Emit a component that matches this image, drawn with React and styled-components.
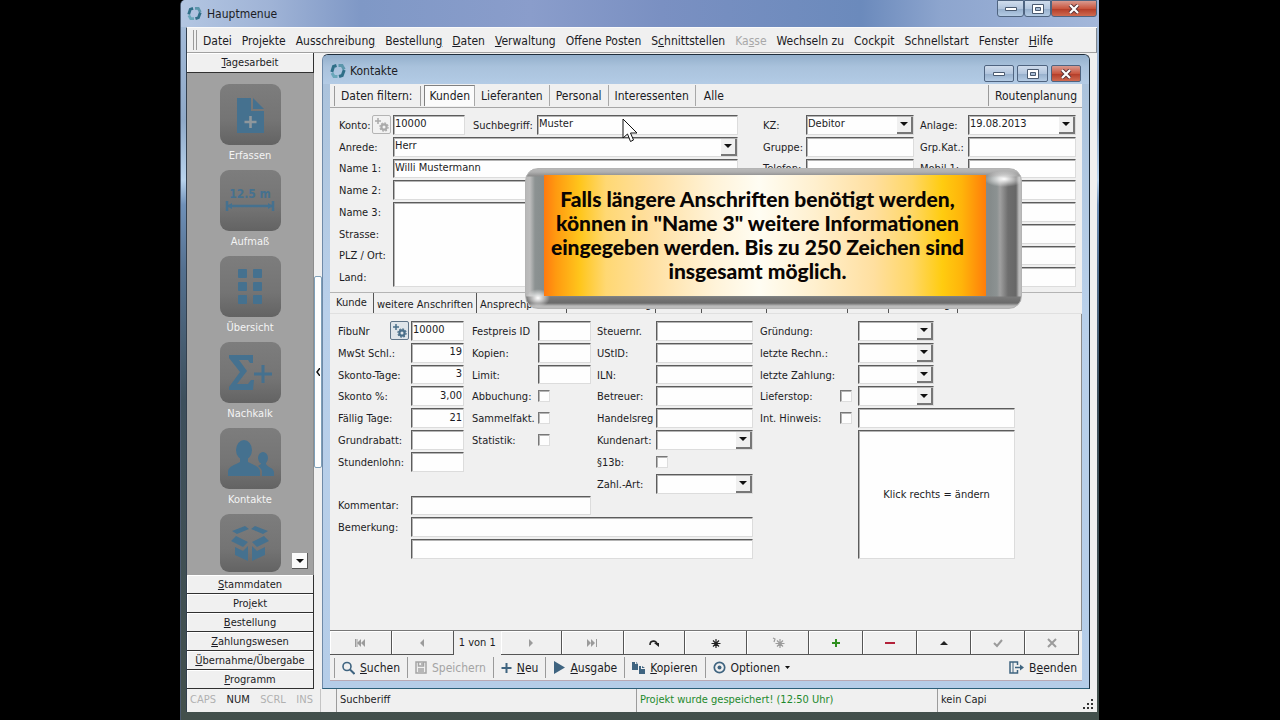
import React from "react";
import styled, { createGlobalStyle, css } from "styled-components";

const Global = createGlobalStyle`
  * { box-sizing: border-box; }
  body { margin: 0; background: #000; overflow-x: hidden; }
  button, input, select, textarea { font: inherit; color: inherit; margin: 0; border-radius: 0; }
  button { background: none; border: 0; padding: 0; cursor: default; white-space: nowrap; }
`;

const ink = "#1c1c24";
const face = "#f0f0f0";
const edge = "#5c5c5c";
const steel = "#3f6480";

/* ---------- outer window ---------- */

const Stage = styled.div`
  display: grid;
  grid-template-columns: 180px minmax(0, 1fr) 181px;
  min-height: 100vh;
  color: ${ink};
  font-family: "DejaVu Sans Condensed", "DejaVu Sans", Tahoma, sans-serif;
  font-stretch: condensed;
  font-size: 12px;
  line-height: 16px;
`;

const Frame = styled.div`
  grid-column: 2;
  display: flex;
  flex-direction: column;
  padding: 0 2px 8px 5px;
  background: linear-gradient(180deg, #a9c0de 0, #8fa9c8 120px, #b9d4ee 180px, #6f90b8 205px, #54708f 270px, #3d4f5c 400px, #43504c 720px);
  border-left: 1px solid #4b5a70;
  border-bottom: 2px solid #0a0a0a;
  border-top-left-radius: 5px;
`;

const TitleBar = styled.header`
  display: flex;
  align-items: center;
  height: 27px;
  margin: 0 -2px 0 -5px;
  padding-left: 6px;
  gap: 5px;
  border-top-left-radius: 5px;
  background: linear-gradient(90deg, #b3c6e2 0, #9fb3d6 90px, #7f98c6 180px, #8a9dcb 350px, #7a90c2 480px, #6b8abc 680px, #8da5ce 760px, #a3b7da 100%);
`;

const Title = styled.h1`
  flex: 1;
  margin: 0;
  font-size: 12px;
  font-weight: 400;
`;

const WinButtons = styled.div`
  display: flex;
  align-self: flex-start;
  gap: ${(p) => (p.$spaced ? "3px" : "0")};
  margin-top: ${(p) => (p.$spaced ? "8px" : "0")};
  margin-right: ${(p) => (p.$spaced ? "1px" : "2px")};
`;

const WinButton = styled.button`
  display: flex;
  align-items: center;
  justify-content: center;
  width: ${(p) => p.$w}px;
  height: 17px;
  border: 1px solid #4f6480;
  border-radius: ${(p) => (p.$spaced ? "2px" : "0 0 3px 3px")};
  background: ${(p) =>
    p.$close
      ? "linear-gradient(#d99a90, #c9563f 50%, #b23a26 51%, #cf6a50)"
      : "linear-gradient(#cfdcec, #b3c6de 50%, #95aecb 51%, #b4cbe4)"};
`;

const Client = styled.div`
  flex: 1;
  display: flex;
  flex-direction: column;
  background: ${face};
  border-left: 1px solid #33404f;
  border-top: 1px solid #fafafa;
`;

const MenuBar = styled.nav`
  display: flex;
  align-items: center;
  height: 25px;
  padding-left: 6px;
  border-bottom: 1px solid #a0a0a0;
  border-right: 1px solid #808890;
`;

const Grip = styled.span`
  width: ${(p) => (p.$double ? "4px" : "1px")};
  height: 20px;
  border: solid #9a9a9a;
  border-width: 0 1px 0 ${(p) => (p.$double ? "1px" : "0")};
`;

const MenuItem = styled.button`
  margin-left: 10px;
  padding-top: 1px;
  color: ${(p) => (p.disabled ? "#a8a8a8" : ink)};
  &:first-of-type { margin-left: 6px; }
`;

const Body = styled.div`
  flex: 1;
  display: grid;
  grid-template-columns: 127px 8px minmax(0, 1fr) 7px;
`;

/* ---------- sidebar ---------- */

const Sidebar = styled.aside`
  display: flex;
  flex-direction: column;
`;

const GroupButton = styled.button`
  height: ${(p) => (p.$tall ? "20px" : "19px")};
  line-height: 17px;
  font-size: 11px;
  background: ${face};
  border: solid #303030;
  border-width: 0 1px 1px 0;
  box-shadow: inset 1px 1px #fff;
`;

const IconPane = styled.div`
  position: relative;
  display: flex;
  flex-direction: column;
  align-items: center;
  flex: 1;
  padding-top: 11px;
  background: #a1a1a1;
  border-right: 1px solid #8c8c8c;
  color: #f4f4f4;
  font-size: 11px;
`;

const Shortcut = styled.button`
  display: flex;
  flex-direction: column;
  align-items: center;
  height: ${(p) => (p.$last ? "61px" : "86px")};
`;

const Tile = styled.span`
  display: flex;
  align-items: center;
  justify-content: center;
  width: 61px;
  height: 61px;
  margin-bottom: 3px;
  border-radius: 9px;
  background: linear-gradient(#7d7d7d, #747474 60%, #636363);
`;

const ScrollDown = styled.button`
  position: absolute;
  right: 5px;
  bottom: 6px;
  display: flex;
  align-items: center;
  justify-content: center;
  width: 16px;
  height: 16px;
  background: #fafafa;
  border: solid #555;
  border-width: 0 1px 1px 0;
`;

const Splitter = styled.div`
  display: flex;
  flex-direction: column;
  padding-top: 223px;
`;

const SplitterGrip = styled.button`
  display: flex;
  align-items: center;
  justify-content: center;
  height: 192px;
  background: #fdfdfd;
  border: 1px solid #7e9fb8;
  border-radius: 2px;
`;

/* ---------- contact window ---------- */

const Child = styled.main`
  position: relative;
  display: flex;
  flex-direction: column;
  margin: 1px 0 0 0;
  padding: 0 7px 7px 7px;
  background: linear-gradient(180deg, #a9c1da, #b9d0ea 40%, #b5cde8);
  border: 1px solid #1d2c3a;
  border-left-color: #6f8aa8;
  border-bottom-color: #2c5f78;
  border-radius: 6px 6px 0 0;
`;

const ChildTitle = styled.div`
  display: flex;
  align-items: center;
  height: 29px;
  margin: 0 -7px;
  padding: 2px 7px 0;
  gap: 4px;
  border-radius: 5px 5px 0 0;
  background: linear-gradient(#93afcb, #a9c2dc 40%, #b3cbe5);
`;

const Panel = styled.div`
  flex: 1;
  display: flex;
  flex-direction: column;
  background: ${face};
`;

const FilterBar = styled.div`
  display: flex;
  align-items: center;
  height: 24px;
  padding: 0 4px 0 4px;
  border-bottom: 1px solid #a6a6a6;
`;

const FilterLabel = styled.span`
  padding: 0 8px 0 6px;
  border-right: 1px solid #9a9a9a;
  line-height: 20px;
`;

const FilterTab = styled.button`
  height: 21px;
  padding: 0 6px;
  line-height: 20px;
  border-right: 1px solid #a8a8a8;
  ${(p) =>
    p.$active &&
    css`
      margin-left: 3px;
      padding: 0 4px;
      background: #fbfbfb;
      border-left: 1px solid #808080;
      border-top: 1px solid #808080;
    `}
  ${(p) => p.$plain && css`padding: 0 8px; border-right: 0;`}
  ${(p) =>
    p.$end &&
    css`
      margin-left: auto;
      padding: 0 1px 0 6px;
      border-right: 0;
      border-left: 1px solid #9a9a9a;
    `}
`;

const fieldLook = css`
  width: 100%;
  min-width: 0;
  background: #fefefe;
  border: 1px solid ${edge};
  border-right-color: #dcdcdc;
  border-bottom-color: #dcdcdc;
  box-shadow: inset 1px 1px #b4b4b4;
  outline: 0;
`;

const HeadForm = styled.form`
  display: grid;
  grid-template-columns: 54px minmax(0, 346px) 25px 43px minmax(0, 108px) 6px 48px minmax(0, 108px);
  grid-template-rows: repeat(8, minmax(0, 1fr));
  row-gap: 2px;
  height: 185px;
  padding: 7px 6px 5px 9px;
  font-size: 11px;
  border-bottom: 1px solid #b4b4b4;
`;

const CustomerForm = styled.form`
  display: grid;
  grid-template-columns:
    73px minmax(0, 53px) 8px 66px minmax(0, 53px) 6px 59px minmax(0, 97px)
    7px 80px 18px minmax(0, 76px) minmax(0, 81px);
  grid-template-rows: repeat(11, minmax(0, 1fr));
  row-gap: 2px;
  height: 245px;
  padding: 7px 0 0 8px;
  font-size: 11px;
`;

const Label = styled.label`
  grid-column: ${(p) => p.$c};
  grid-row: ${(p) => p.$r};
  align-self: center;
  padding-top: 2px;
  line-height: 16px;
  white-space: nowrap;
`;

const Text = styled.input`
  ${fieldLook}
  grid-column: ${(p) => p.$c};
  grid-row: ${(p) => p.$r};
  padding: 0 2px 1px 1px;
  text-align: ${(p) => (p.$num ? "right" : "left")};
  ${(p) => p.$num && css`padding-right: 1px;`}
`;

const Area = styled.textarea`
  ${fieldLook}
  grid-column: ${(p) => p.$c};
  grid-row: ${(p) => p.$r};
  resize: none;
`;

const ComboBox = styled.span`
  ${fieldLook}
  grid-column: ${(p) => p.$c};
  grid-row: ${(p) => p.$r};
  display: flex;
  align-items: stretch;
`;

const ComboSelect = styled.select`
  flex: 1;
  min-width: 0;
  appearance: none;
  border: 0;
  outline: 0;
  background: none;
  padding: 0 0 1px 1px;
`;

const ComboArrow = styled.span`
  display: flex;
  align-items: center;
  justify-content: center;
  width: 16px;
  margin-top: 1px;
  background: ${face};
  border: solid #777;
  border-width: 0 2px 2px 0;
  pointer-events: none;
`;

const Check = styled.input`
  grid-column: ${(p) => p.$c};
  grid-row: ${(p) => p.$r};
  align-self: center;
  appearance: none;
  width: 12px;
  height: 12px;
  background: #fdfdfd;
  border: 1px solid #777;
  border-right-color: #ddd;
  border-bottom-color: #ddd;
  box-shadow: inset 1px 1px #b4b4b4;
`;

const KontoRow = styled.div`
  grid-column: 2;
  grid-row: 1;
  display: grid;
  grid-template-columns: 72px 8px 64px minmax(0, 1fr);
`;

const LabelRow = styled.div`
  grid-column: ${(p) => p.$c};
  grid-row: ${(p) => p.$r};
  display: flex;
  justify-content: space-between;
  align-items: center;
  padding-right: 2px;
`;

const GearButton = styled.button`
  display: flex;
  align-items: center;
  justify-content: center;
  width: 19px;
  height: 19px;
  flex: none;
  border: 1px solid ${(p) => (p.disabled ? "#b4b4b4" : "#5f7488")};
  border-radius: 2px;
  background: ${(p) => (p.disabled ? "#f2f2f2" : "#dfe5ea")};
`;

const PhotoBox = styled.div`
  ${fieldLook}
  grid-column: 12 / 14;
  grid-row: 6 / 12;
  display: flex;
  align-items: center;
  justify-content: center;
`;

const Tabs = styled.div`
  display: flex;
  height: 21px;
  font-size: 11px;
  border-bottom: 1px solid #e0e0e0;
`;

const Tab = styled.button`
  width: ${(p) => p.$w}px;
  padding-top: ${(p) => (p.$active ? "0" : "3px")};
  overflow: hidden;
  border-right: 1px solid #555;
`;

const Sheet = styled.section`
  flex: 1;
  border-right: 1px solid #8a8a8a;
`;

/* ---------- record navigator and commands ---------- */

const Navigator = styled.div`
  display: flex;
  height: 25px;
  padding-right: 3px;
  border-top: 1px solid #777;
`;

const NavCell = styled.button`
  flex: ${(p) => p.$w} 1 0;
  display: flex;
  align-items: center;
  justify-content: center;
  border: solid #555;
  border-width: 0 1px 1px 0;
  box-shadow: inset 1px 1px #fff;
`;

const NavCount = styled.span`
  flex: 48 1 0;
  text-align: center;
  font-size: 11px;
  line-height: 24px;
  white-space: nowrap;
`;

const Commands = styled.div`
  display: flex;
  align-items: center;
  height: 26px;
  padding: 0 4px 0 4px;
  border-bottom: 1px solid #b9a9b4;
`;

const Command = styled.button`
  display: flex;
  align-items: center;
  gap: 5px;
  height: 21px;
  padding: 0 7px;
  color: ${(p) => (p.disabled ? "#a4a4a4" : ink)};
  border-right: 1px solid ${(p) => (p.$plain ? "transparent" : "#9a9a9a")};
  ${(p) => p.$end && css`margin-left: auto; padding: 0;`}
`;

const StatusBar = styled.footer`
  display: grid;
  grid-template-columns: 134px 15px minmax(0, 300fr) minmax(0, 301fr) minmax(0, 146fr) 14px;
  height: 23px;
  font-size: 11px;
  line-height: 22px;
`;

const Keys = styled.div`
  display: flex;
  justify-content: space-between;
  padding: 0 7px 0 3px;
  border-right: 1px solid #c4c4c4;
`;

const Key = styled.span`
  color: ${(p) => (p.$on ? ink : "#b0b0b0")};
`;

const StatusCell = styled.div`
  padding-left: 3px;
  border-left: 1px solid #9c9c9c;
  color: ${(p) => (p.$ok ? "#1d8a2c" : ink)};
`;

/* ---------- overlays ---------- */

const Callout = styled.div`
  position: absolute;
  left: 202px;
  top: 113px;
  width: 497px;
  height: 141px;
  padding: 6px 35px 12px 18px;
  border-radius: 13px;
  border: 1px solid #b4b4b4;
  background:
    radial-gradient(ellipse 20px 8px at 478px 10px, #ffffff, rgba(255, 255, 255, 0) 100%),
    radial-gradient(ellipse 12px 9px at 12px 129px, #ffffff, rgba(255, 255, 255, 0) 100%),
    linear-gradient(180deg, #b8b8b8 0, #b0b0b0 3px, #8c8c8c 7px, rgba(140, 140, 140, 0) 8px, rgba(140, 140, 140, 0) 127px, #7a7a7a 128px, #6a6a6a 134px, #bcbcbc 137px, #bcbcbc 140px),
    linear-gradient(90deg, #b8b8b8 0, #bdbdbd 4px, #8c9292 9px, #858b8b 20px, #858b8b 464px, #8c9292 471px, #a0a0a0 474px, #6e6e6e 482px, #676767 490px, #bcbcbc 493px);
`;

const CalloutText = styled.p`
  height: 100%;
  margin: 0;
  padding: 12px 15px 0 0;
  color: #0a0503;
  text-align: center;
  white-space: nowrap;
  font-family: Lato, sans-serif;
  font-stretch: normal;
  font-weight: 900;
  font-size: 21px;
  line-height: 24px;
  background: linear-gradient(90deg, #ff7a10 0, #ff9a10 12px, #ffc61c 36px, #ffd873 62px, #ffdf9f 105px, #fff3d8 170px, #fffdf3 215px, #fff0cf 270px, #ffdf9f 330px, #ffd766 368px, #ffcc10 398px, #ffb40a 418px, #ff7d0a 100%);
`;

const Pointer = styled.svg`
  position: absolute;
  left: 299px;
  top: 63px;
`;

/* ---------- drawings ---------- */

const Logo = ({ size = 15 }) => (
  <svg width={size} height={size} viewBox="0 0 16 16" fill="none" strokeWidth="3">
    <path d="M8.500 2.500h3.500l2.200 4" stroke="#5b96ab" />
    <path d="M14.200 7l-2 5.500-3.200 1" stroke="#2f6f88" />
    <path d="M7.500 13.500H4l-2-3.500" stroke="#6aa7ba" />
    <path d="M1.800 9l1.700-5.500 3-1" stroke="#2f6f88" />
  </svg>
);

const Down = () => (
  <svg width="8" height="4" viewBox="0 0 8 4"><path d="M0 0h8L4 4z" fill="#111" /></svg>
);

const MinGlyph = () => (
  <svg width="12" height="6" viewBox="0 0 12 6"><path d="M.5 1.5h11v3H.5z" fill="#fff" stroke="#4a5a70" /></svg>
);
const MaxGlyph = () => (
  <svg width="12" height="10" viewBox="0 0 12 10">
    <path d="M.5.5h11v9H.5z" fill="#fff" stroke="#4a5a70" />
    <path d="M3.5 3.5h5v3h-5z" fill="#a9bdd6" stroke="#4a5a70" />
  </svg>
);
const CloseGlyph = () => (
  <svg width="12" height="10" viewBox="0 0 12 10">
    <path d="M2 1l8 8M10 1L2 9" stroke="#5a3035" strokeWidth="4" />
    <path d="M2 1l8 8M10 1L2 9" stroke="#fff" strokeWidth="2.2" />
  </svg>
);

const GearPlus = ({ color }) => (
  <svg width="15" height="15" viewBox="0 0 15 15" fill="none" stroke={color}>
    <path d="M4 1v6M1 4h6" strokeWidth="1.5" />
    <circle cx="10" cy="10" r="2.6" strokeWidth="2.2" />
    <circle cx="10" cy="10" r="4.1" strokeWidth="1.2" strokeDasharray="1.8 1.4" />
  </svg>
);

const blue = "#45718f";
const tiles = {
  Erfassen: (
    <svg width="40" height="44" viewBox="0 0 40 44">
      <path d="M7 5h14v13h13v22H7z" fill={blue} />
      <path d="M23 5l11 11H23z" fill={blue} />
      <path d="M20.500 23v12M14.500 29h12" stroke="#8f979c" strokeWidth="2.600" />
    </svg>
  ),
  "Aufmaß": (
    <svg width="54" height="44" viewBox="0 0 54 44">
      <text x="27" y="19" textAnchor="middle" fontSize="12" fontWeight="700" fill={blue}>12.5 m</text>
      <path d="M4 27h46M4 22v10M50 22v10" stroke={blue} strokeWidth="2.500" />
      <path d="M4 27l5-3v6zM50 27l-5-3v6z" fill={blue} />
    </svg>
  ),
  "Übersicht": (
    <svg width="30" height="40" viewBox="0 0 30 40" fill={blue}>
      {[2, 15, 28].map((y) => (
        <g key={y}>
          <rect x="3" y={y} width="9" height="9" rx="1" />
          <rect x="18" y={y} width="9" height="9" rx="1" />
        </g>
      ))}
    </svg>
  ),
  Nachkalk: (
    <svg width="46" height="40" viewBox="0 0 46 40">
      <path d="M2 2h24v8h-3l-2-3H12l8 11-10 13h11l3-4h3l-1 10H2v-3l11-15L2 5z" fill={blue} />
      <path d="M36 12v18M27 21h18" stroke={blue} strokeWidth="3" />
    </svg>
  ),
  Kontakte: (
    <svg width="48" height="40" viewBox="0 0 48 40" fill={blue}>
      <ellipse cx="18" cy="11" rx="8" ry="10" />
      <path d="M2 37v-5c1-5 7-6 12-9v-5h8v5c5 3 11 4 12 9v5z" />
      <ellipse cx="37" cy="19" rx="5" ry="6" />
      <path d="M36 37v-5c-1-3-3-4-4-5l3-2v-3h5v3c2 4 7 3 8 8v4z" />
    </svg>
  ),
  Material: (
    <svg width="44" height="40" viewBox="0 0 44 40" fill={blue}>
      <path d="M17 3l4 3-12 5-5-3zM27 3l-4 3 12 5 5-3z" />
      <path d="M8 13l12 6-5 5-12-6zM36 13l-12 6 5 5 12-6z" />
      <path d="M7 24l8 4 5-5v15L7 32zM37 24l-8 4-5-5v15l13-6z" />
    </svg>
  ),
};

const glyph = (children, color = "#9b9b9b") => (
  <svg width="16" height="12" viewBox="0 0 16 12" fill={color} stroke={color} strokeWidth="0">{children}</svg>
);

const navCells = [
  ["Erster", 62, glyph(<><path d="M3.500 2v8M5 2v8" strokeWidth="1" /><path d="M9 2v8L5 6zM13 2v8L9 6z" /></>)],
  ["Zurück", 62, glyph(<path d="M10 2v8L6 6z" />)],
  null,
  ["Weiter", 61, glyph(<path d="M6 2v8l4-4z" />)],
  ["Letzter", 62, glyph(<><path d="M12.500 2v8" strokeWidth="1" /><path d="M3 2v8l4-4zM7 2v8l4-4z" /></>)],
  ["Neu laden", 62, glyph(<><path d="M4 8c0-5 6-5 7-1" fill="none" strokeWidth="1.600" /><path d="M8 6h5v4z" /></>, "#222")],
  ["Einfügen", 62, glyph(<path d="M8 2v9M3.500 6.500h9M5 3.500l6 6M11 3.500l-6 6" strokeWidth="1.200" />, "#222")],
  ["Einfügen davor", 62, glyph(<path d="M10 2v9M5.500 6.500h9M7 3.500l6 6M13 3.500l-6 6M3 1l2 1-1 3" fill="none" strokeWidth="1.200" />)],
  ["Hinzufügen", 54, glyph(<path d="M8 2v8M4 6h8" strokeWidth="2" />, "#2f8f1f")],
  ["Löschen", 54, glyph(<path d="M3 6h10" strokeWidth="2" />, "#b3223a")],
  ["Bearbeiten", 54, glyph(<path d="M4 8l4-4 4 4z" />, "#222")],
  ["Übernehmen", 54, glyph(<path d="M4 6l3 3 5-6" fill="none" strokeWidth="2" />)],
  ["Abbrechen", 54, glyph(<path d="M4 2l8 8M12 2l-8 8" strokeWidth="2" />)],
];

const SearchIcon = () => (
  <svg width="13" height="14" viewBox="0 0 13 14" fill="none" stroke={steel}>
    <circle cx="5" cy="5.500" r="4" strokeWidth="1.600" /><path d="M8 8.500l4.500 4.500" strokeWidth="2" />
  </svg>
);
const SaveIcon = () => (
  <svg width="12" height="13" viewBox="0 0 12 13" fill="none" stroke="#a4a4a4" strokeWidth="1.500">
    <path d="M1 1h10v11H1zM3.500 1v4h5V1M3 8h6M3 10h6" /><path d="M7 2v2" />
  </svg>
);
const PlusIcon = () => (
  <svg width="11" height="12" viewBox="0 0 11 12"><path d="M5.500 1v10M.5 6h10" stroke={steel} strokeWidth="2" /></svg>
);
const PlayIcon = () => (
  <svg width="12" height="13" viewBox="0 0 12 13"><path d="M1 0l11 6.500L1 13z" fill={steel} /></svg>
);
const CopyIcon = () => (
  <svg width="13" height="12" viewBox="0 0 13 12" fill={steel}>
    <path d="M0 0h3v2h3v6H0zM4 0l2 1.500H4z" /><path d="M7 4h2v3h4v5H7zM10 4l3 2h-3z" />
  </svg>
);
const OptionIcon = () => (
  <svg width="13" height="13" viewBox="0 0 13 13" fill="none" stroke={steel}>
    <circle cx="6.500" cy="6.500" r="5.200" strokeWidth="1.700" /><circle cx="6.500" cy="6.500" r="2" fill={steel} stroke="none" />
  </svg>
);
const ExitIcon = () => (
  <svg width="15" height="13" viewBox="0 0 15 13" fill="none" stroke={steel}>
    <path d="M8.500 4V1H1v11h7.500V9" strokeWidth="1.500" /><path d="M4 1v11" /><path d="M6 6.500h7" strokeWidth="1.500" /><path d="M11 3.500l4 3-4 3z" fill={steel} stroke="none" />
  </svg>
);

/* ---------- small parts ---------- */

/* The letter after "&" is the access key and is underlined. */
const Mnemonic = ({ text }) => {
  const at = text.indexOf("&");
  if (at < 0) return text;
  return (
    <span>
      {text.slice(0, at)}
      <u>{text[at + 1]}</u>
      {text.slice(at + 2)}
    </span>
  );
};

const Field = ({ id, label, lc, c, r, value = "", num }) => (
  <>
    {label && <Label htmlFor={id} $c={lc} $r={r}>{label}</Label>}
    <Text id={id} aria-label={label ? undefined : id} $c={c} $r={r} $num={num} defaultValue={value} />
  </>
);

const Combo = ({ id, label, lc, c, r, value = "" }) => (
  <>
    {label && <Label htmlFor={id} $c={lc} $r={r}>{label}</Label>}
    <ComboBox $c={c} $r={r}>
      <ComboSelect id={id} aria-label={label ? undefined : id} defaultValue={value}>
        <option>{value}</option>
      </ComboSelect>
      <ComboArrow><Down /></ComboArrow>
    </ComboBox>
  </>
);

const Tick = ({ id, label, lc, c, r }) => (
  <>
    <Label htmlFor={id} $c={lc} $r={r}>{label}</Label>
    <Check id={id} type="checkbox" $c={c} $r={r} />
  </>
);

const Buttons = ({ spaced, sizes }) => (
  <WinButtons $spaced={spaced}>
    <WinButton $spaced={spaced} $w={sizes[0]} aria-label="Minimieren"><MinGlyph /></WinButton>
    <WinButton $spaced={spaced} $w={sizes[1]} aria-label="Maximieren"><MaxGlyph /></WinButton>
    <WinButton $spaced={spaced} $w={sizes[2]} $close aria-label="Schließen"><CloseGlyph /></WinButton>
  </WinButtons>
);

const menu = ["Datei", "Projekte", "Ausschreibun&g", "Bestellun&g", "&Daten", "&Verwaltung", "Offene Posten", "S&chnittstellen", "Ka&sse", "Wechseln zu", "Cockpit", "Schnellstart", "Fenster", "&Hilfe"];
const groups = ["&Stammdaten", "Pro&jekt", "&Bestellung", "&Zahlungswesen", "&Übernahme/Übergabe", "&Programm"];
const tabs = [["Kunde", 44], ["weitere Anschriften", 103], ["Ansprechpartner", 90], ["Bankverbindung", 89], ["Notiz", 46], ["Termine", 65], ["Dokumente", 81], ["Info", 41], ["Einstellung", 69]];

export default function App() {
  return (
    <Stage>
      <Global />
      <Frame>
        <TitleBar>
          <Logo />
          <Title>Hauptmenue</Title>
          <Buttons sizes={[27, 27, 46]} />
        </TitleBar>
        <Client>
          <MenuBar>
            <Grip $double />
            {menu.map((m) => (
              <MenuItem key={m} disabled={m === "Ka&sse"}><Mnemonic text={m} /></MenuItem>
            ))}
          </MenuBar>
          <Body>
            <Sidebar>
              <GroupButton $tall><Mnemonic text="&Tagesarbeit" /></GroupButton>
              <IconPane>
                {Object.entries(tiles).map(([name, icon]) =>
                  name === "Material" ? (
                    <Shortcut key={name} $last aria-label={name}><Tile>{icon}</Tile></Shortcut>
                  ) : (
                    <Shortcut key={name}><Tile>{icon}</Tile>{name}</Shortcut>
                  )
                )}
                <ScrollDown aria-label="Weiter"><Down /></ScrollDown>
              </IconPane>
              {groups.map((g) => (
                <GroupButton key={g}><Mnemonic text={g} /></GroupButton>
              ))}
            </Sidebar>
            <Splitter>
              <SplitterGrip aria-label="Leiste einklappen">
                <svg width="4" height="8" viewBox="0 0 4 8"><path d="M4 0L1 4l3 4" fill="none" stroke="#111" strokeWidth="1.500" /></svg>
              </SplitterGrip>
            </Splitter>

            <Child>
              <ChildTitle>
                <Logo size={16} />
                <Title as="h2">Kontakte</Title>
                <Buttons spaced sizes={[30, 31, 30]} />
              </ChildTitle>
              <Panel>
                <FilterBar>
                  <Grip />
                  <FilterLabel>Daten filtern:</FilterLabel>
                  <FilterTab $active>Kunden</FilterTab>
                  <FilterTab>Lieferanten</FilterTab>
                  <FilterTab>Personal</FilterTab>
                  <FilterTab>Interessenten</FilterTab>
                  <FilterTab $plain>Alle</FilterTab>
                  <FilterTab $end>Routenplanung</FilterTab>
                </FilterBar>

                <HeadForm>
                  <LabelRow $c={1} $r={1}>
                    <Label htmlFor="konto">Konto:</Label>
                    <GearButton type="button" disabled aria-label="Konto vergeben"><GearPlus color="#aaa" /></GearButton>
                  </LabelRow>
                  <KontoRow>
                    <Text id="konto" defaultValue="10000" />
                    <Label $c={3} $r={1} htmlFor="such">Suchbegriff:</Label>
                    <Text $c={4} id="such" defaultValue="Muster" />
                  </KontoRow>
                  <Combo id="anrede" label="Anrede:" lc={1} c={2} r={2} value="Herr" />
                  <Field id="name1" label="Name 1:" lc={1} c={2} r={3} value="Willi Mustermann" />
                  <Field id="name2" label="Name 2:" lc={1} c={2} r={4} />
                  <Label htmlFor="name3" $c={1} $r={5}>Name 3:</Label>
                  <Area id="name3" $c={2} $r="5 / 9" />
                  <Label as="span" $c={1} $r={6}>Strasse:</Label>
                  <Label as="span" $c={1} $r={7}>PLZ / Ort:</Label>
                  <Label as="span" $c={1} $r={8}>Land:</Label>

                  <Combo id="kz" label="KZ:" lc={4} c={5} r={1} value="Debitor" />
                  <Field id="gruppe" label="Gruppe:" lc={4} c={5} r={2} />
                  <Field id="telefon" label="Telefon:" lc={4} c={5} r={3} />
                  <Combo id="anlage" label="Anlage:" lc={7} c={8} r={1} value="19.08.2013" />
                  <Field id="grpkat" label="Grp.Kat.:" lc={7} c={8} r={2} />
                  <Field id="mobil1" label="Mobil 1:" lc={7} c={8} r={3} />
                  {[4, 5, 6, 7, 8].map((r) => (
                    <Field key={r} id={"Kontakt " + r} c={8} r={r} />
                  ))}
                </HeadForm>

                <Tabs>
                  {tabs.map(([t, w], i) => (
                    <Tab key={t} $w={w} $active={i === 0}>{t}</Tab>
                  ))}
                </Tabs>

                <Sheet>
                  <CustomerForm>
                    <LabelRow $c={1} $r={1}>
                      <Label htmlFor="fibu">FibuNr</Label>
                      <GearButton type="button" aria-label="Nummer vergeben"><GearPlus color="#4a6f8a" /></GearButton>
                    </LabelRow>
                    <Text id="fibu" $c={2} $r={1} defaultValue="10000" />
                    <Field id="mwst" label="MwSt Schl.:" lc={1} c={2} r={2} value="19" num />
                    <Field id="stage" label="Skonto-Tage:" lc={1} c={2} r={3} value="3" num />
                    <Field id="skonto" label="Skonto %:" lc={1} c={2} r={4} value="3,00" num />
                    <Field id="faellig" label="Fällig Tage:" lc={1} c={2} r={5} value="21" num />
                    <Field id="rabatt" label="Grundrabatt:" lc={1} c={2} r={6} />
                    <Field id="lohn" label="Stundenlohn:" lc={1} c={2} r={7} />

                    <Field id="fest" label="Festpreis ID" lc={4} c={5} r={1} />
                    <Field id="kopien" label="Kopien:" lc={4} c={5} r={2} />
                    <Field id="limit" label="Limit:" lc={4} c={5} r={3} />
                    <Tick id="abb" label="Abbuchung:" lc={4} c={5} r={4} />
                    <Tick id="sammel" label="Sammelfakt." lc={4} c={5} r={5} />
                    <Tick id="stat" label="Statistik:" lc={4} c={5} r={6} />

                    <Field id="steuer" label="Steuernr." lc={7} c={8} r={1} />
                    <Field id="ust" label="UStID:" lc={7} c={8} r={2} />
                    <Field id="iln" label="ILN:" lc={7} c={8} r={3} />
                    <Field id="betreuer" label="Betreuer:" lc={7} c={8} r={4} />
                    <Field id="hreg" label="Handelsreg" lc={7} c={8} r={5} />
                    <Combo id="kart" label="Kundenart:" lc={7} c={8} r={6} />
                    <Tick id="p13b" label="§13b:" lc={7} c={8} r={7} />
                    <Combo id="zart" label="Zahl.-Art:" lc={7} c={8} r={8} />

                    <Combo id="gruend" label="Gründung:" lc={10} c={12} r={1} />
                    <Combo id="rechn" label="letzte Rechn.:" lc={10} c={12} r={2} />
                    <Combo id="zahlung" label="letzte Zahlung:" lc={10} c={12} r={3} />
                    <Tick id="stop" label="Lieferstop:" lc={10} c={11} r={4} />
                    <Combo id="Lieferstop seit" c={12} r={4} />
                    <Tick id="hinweis" label="Int. Hinweis:" lc={10} c={11} r={5} />
                    <Field id="Hinweistext" c="12 / 14" r={5} />
                    <PhotoBox>Klick rechts = ändern</PhotoBox>

                    <Field id="kommentar" label="Kommentar:" lc={1} c="2 / 6" r={9} />
                    <Field id="bem" label="Bemerkung:" lc={1} c="2 / 9" r={10} />
                    <Field id="Bemerkung Zeile 2" c="2 / 9" r={11} />
                  </CustomerForm>
                </Sheet>

                <Navigator>
                  {navCells.map((cell) =>
                    cell ? (
                      <NavCell key={cell[0]} $w={cell[1]} aria-label={cell[0]}>{cell[2]}</NavCell>
                    ) : (
                      <NavCount key="count">1 von 1</NavCount>
                    )
                  )}
                </Navigator>
                <Commands>
                  <Grip />
                  <Command><SearchIcon /><Mnemonic text="&Suchen" /></Command>
                  <Command disabled><SaveIcon />Speichern</Command>
                  <Command><PlusIcon /><Mnemonic text="&Neu" /></Command>
                  <Command><PlayIcon /><Mnemonic text="&Ausgabe" /></Command>
                  <Command><CopyIcon /><Mnemonic text="&Kopieren" /></Command>
                  <Command $plain>
                    <OptionIcon />Optionen
                    <svg width="5" height="3" viewBox="0 0 5 3"><path d="M0 0h5L2.500 3z" fill="#111" /></svg>
                  </Command>
                  <Command $plain $end><ExitIcon /><Mnemonic text="B&eenden" /></Command>
                </Commands>
              </Panel>

              <Pointer width="16" height="25" viewBox="0 0 16 25">
                <path d="M1 1v19l4.500-4 3 7.500 3-1.500-3-7H15z" fill="#fff" stroke="#111" />
              </Pointer>
              <Callout role="note">
                <CalloutText>
                  Falls längere Anschriften benötigt werden,<br />
                  können in "Name 3" weitere Informationen<br />
                  eingegeben werden. Bis zu 250 Zeichen sind<br />
                  insgesamt möglich.
                </CalloutText>
              </Callout>
            </Child>
          </Body>
          <StatusBar>
            <Keys>
              <Key>CAPS</Key><Key $on>NUM</Key><Key>SCRL</Key><Key>INS</Key>
            </Keys>
            <span />
            <StatusCell>Suchberiff</StatusCell>
            <StatusCell $ok>Projekt wurde gespeichert! (12:50 Uhr)</StatusCell>
            <StatusCell>kein Capi</StatusCell>
            <svg width="12" height="22" viewBox="0 0 12 22" fill="#333">
              <path d="M8 10h2v2H8zM4 14h2v2H4zM8 14h2v2H8zM0 18h2v2H0zM4 18h2v2H4zM8 18h2v2H8z" />
            </svg>
          </StatusBar>
        </Client>
      </Frame>
    </Stage>
  );
}
